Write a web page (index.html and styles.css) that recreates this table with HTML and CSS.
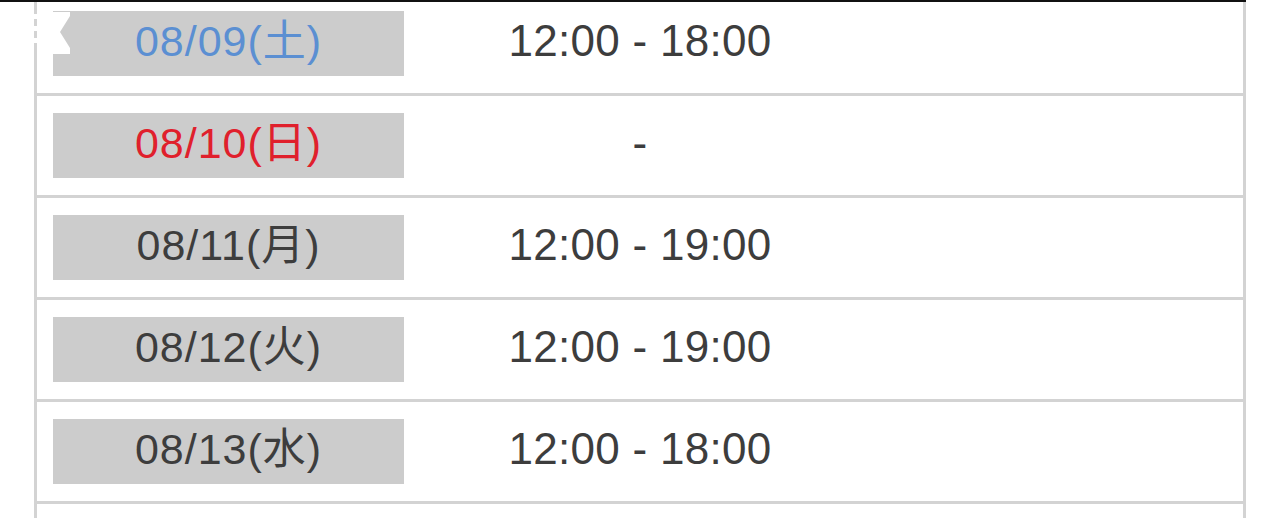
FILE: index.html
```html
<!DOCTYPE html>
<html lang="ja">
<head>
    <meta charset="UTF-8">
    <meta name="viewport" content="width=device-width, initial-scale=1.0">
    <title>営業時間</title>
    <link rel="stylesheet" href="styles.css">
</head>
<body>
    <div class="topline"></div>
    <svg class="glitch" width="44" height="50" viewBox="28 8 44 50" aria-hidden="true">
        <polygon points="50,12 70,12 70,16 60,32 70,48 70,54 50,54" fill="#fff"/>
        <rect x="33" y="14" width="4" height="5" fill="#fff"/>
        <rect x="33" y="26" width="4" height="5" fill="#fff"/>
        <rect x="33" y="38" width="4" height="5" fill="#fff"/>
    </svg>

    <div class="schedule">
        <div class="row">
            <div class="date sat">08/09(土)</div>
            <div class="time">12:00 - 18:00</div>
        </div>
        <div class="row">
            <div class="date sun">08/10(日)</div>
            <div class="time">-</div>
        </div>
        <div class="row">
            <div class="date">08/11(月)</div>
            <div class="time">12:00 - 19:00</div>
        </div>
        <div class="row">
            <div class="date">08/12(火)</div>
            <div class="time">12:00 - 19:00</div>
        </div>
        <div class="row">
            <div class="date">08/13(水)</div>
            <div class="time">12:00 - 18:00</div>
        </div>
        <div class="row row-empty"></div>
    </div>
</body>
</html>
```

FILE: styles.css
```css
* {
    box-sizing: border-box;
    margin: 0;
    padding: 0;
}

body {
    font-family: "Liberation Sans", "Noto Sans CJK JP", sans-serif;
    background: #fff;
    color: #3d3d3d;
    height: 518px;
    overflow: hidden;
}

.topline {
    position: absolute;
    top: 0;
    left: 0;
    width: 1246px;
    height: 2px;
    background: #111;
    z-index: 2;
}

.glitch {
    position: absolute;
    top: 8px;
    left: 28px;
    z-index: 2;
}

.schedule {
    margin-top: -6px;
    margin-left: 34px;
    width: 1212px;
    border-left: 3px solid #d3d3d3;
    border-right: 3px solid #d3d3d3;
}

.row {
    display: flex;
    align-items: center;
    padding: 17px 0 17px 16px;
    border-bottom: 3px solid #d3d3d3;
}

.row-empty {
    height: 60px;
    border-bottom: none;
}

.date {
    width: 351px;
    height: 65px;
    padding-bottom: 5px;
    background: #cccccc;
    font-size: 43px;
    letter-spacing: 1px;
    line-height: 60px;
    text-align: center;
}

.date.sat {
    color: #5b8fd2;
}

.date.sun {
    color: #e0202c;
}

.time {
    width: 472px;
    padding-bottom: 5px;
    font-size: 44px;
    letter-spacing: 0.3px;
    text-align: center;
}
```
